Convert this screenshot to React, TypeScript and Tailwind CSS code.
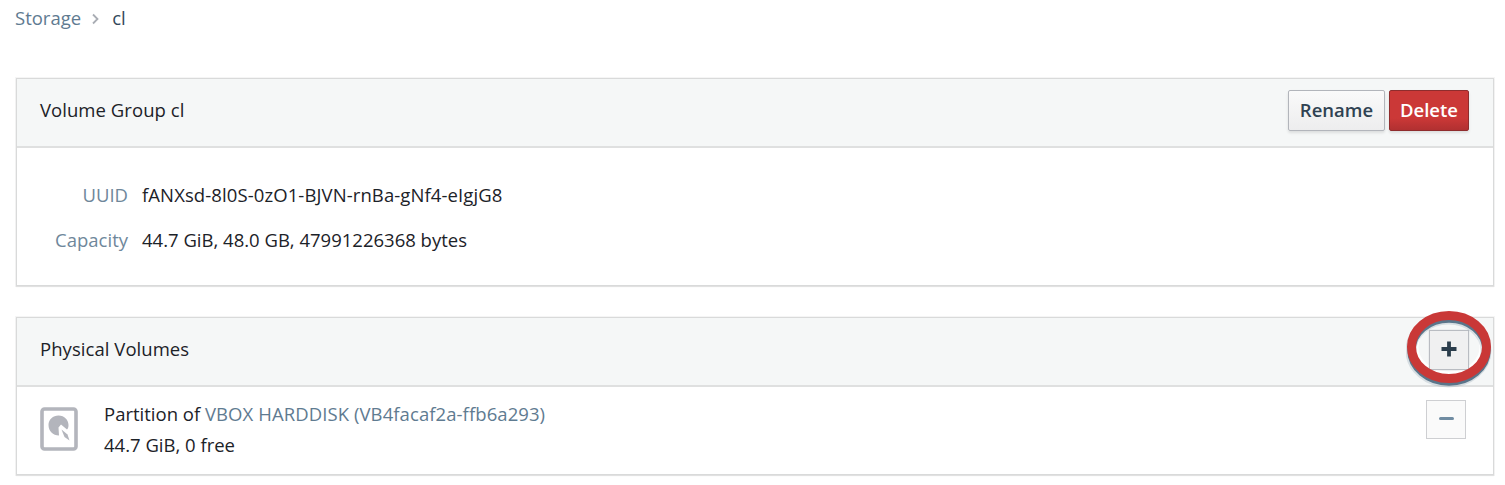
import React from "react";

function Panel({ title, actions, className, children }: { title: string; actions: React.ReactNode; className: string; children: React.ReactNode }) {
  return (
    <section className={`border-[1.500px] border-[#d9dada] bg-white shadow-[0_1px_1px_rgba(0,0,0,0.08),0_0_0_1px_rgba(0,0,0,0.04)] ${className}`}>
      <header className="flex h-[69px] items-center justify-between border-b-2 border-[#dfe0e0] bg-[#f5f7f7] pl-[23px]">
        <h2 className="pb-[5px] tracking-[0.05px]">{title}</h2>
        {actions}
      </header>
      {children}
    </section>
  );
}

function DiskIcon() {
  return (
    <svg className="h-11 w-[38px]" viewBox="0 0 38 44" fill="none">
      <rect x="2" y="2" width="34" height="40" rx="2.500" stroke="#b3b5bc" strokeWidth="3.600" />
      <path d="M19 28.500C13 28.500 8.500 24 8.500 18C8.500 12.500 13 8.500 18.500 8.500C24.500 8.500 28.500 13 28.500 18C28.500 20 28 21.500 27 22.500L21 17.500L18.500 20.500Z" fill="#b3b5bc" />
      <path d="M21.500 22.500L27.500 27.500L29.500 33.500L24.500 30Z" fill="#b3b5bc" />
    </svg>
  );
}

export default function App() {
  return (
    <main className="h-[485px] overflow-hidden bg-white pl-[16px] pr-[11px] font-['Open_Sans',sans-serif] text-[18.500px] leading-[30px] text-[#1c2228]">
      <nav className="flex h-[36px] items-center">
        <a className="-ml-px text-[#5f7b91]">Storage</a>
        <svg className="ml-[11px] mr-[13px] mt-px h-3 w-[7px]" viewBox="0 0 7 12" fill="none">
          <path d="M1 1.500L5.500 6L1 10.500" stroke="#a9adb4" strokeWidth="1.800" />
        </svg>
        <span className="text-[#33485a]">cl</span>
      </nav>

      <Panel
        className="mt-[42px] h-[208px]"
        title="Volume Group cl"
        actions={
          <div className="mb-[4px] mr-[24px] flex gap-[4px] font-semibold">
            <button className="flex h-[41px] w-[97px] items-center justify-center rounded-[2px] border border-[#b2b5bb] bg-linear-to-b from-[#fafafa] to-[#ededee] pb-0.5 text-[#2f4252] shadow-[0_2px_3px_rgba(0,0,0,0.1)]">Rename</button>
            <button className="flex h-[41px] w-[80px] items-center justify-center rounded-[2px] border border-[#8f2c2d] bg-linear-to-b from-[#cb3837] from-70% to-[#b13031] pb-0.5 text-white shadow-[0_2px_3px_rgba(0,0,0,0.1)]">Delete</button>
          </div>
        }
      >
        <dl className="grid grid-cols-[111px_1fr] gap-x-[14px] gap-y-[15px] pt-[32px]">
          <dt className="text-right text-[#6f879b]">UUID</dt>
          <dd className="tracking-[0.1px]">fANXsd-8l0S-0zO1-BJVN-rnBa-gNf4-eIgjG8</dd>
          <dt className="text-right text-[#6f879b]">Capacity</dt>
          <dd>44.7 GiB, 48.0 GB, 47991226368 bytes</dd>
        </dl>
      </Panel>

      <Panel
        className="mt-[31px] h-[158px]"
        title="Physical Volumes"
        actions={
          <div className="relative mb-[3px] mr-[24px]">
            <svg className="pointer-events-none absolute left-[-23px] top-[-20px] h-[80px] w-[88px]" viewBox="0 0 88 80" fill="none">
              <ellipse cx="43" cy="37" rx="35" ry="29" stroke="white" strokeWidth="9" />
            </svg>
            <button className="relative flex h-[40px] w-[40px] items-center justify-center border border-[#b9bcc2] bg-[#f0f0f1] shadow-[0_0_1px_#c2c4c9]">
              <svg className="mb-0.5 h-4 w-4" viewBox="0 0 16 16">
                <path d="M8 0.500V15.500M0.500 8H15.500" stroke="#2b3d4c" strokeWidth="3.800" />
              </svg>
            </button>
            <svg className="pointer-events-none absolute left-[-23px] top-[-20px] h-[80px] w-[88px]" viewBox="0 0 88 80" fill="none">
              <ellipse cx="42.500" cy="40.500" rx="37.500" ry="31.500" stroke="#5f7b91" strokeOpacity="0.2" strokeWidth="11" />
              <ellipse cx="43" cy="40" rx="37.500" ry="31.500" stroke="#5a758a" strokeWidth="8.500" />
              <ellipse cx="43" cy="37" rx="37.500" ry="31.500" stroke="#c93837" strokeWidth="9" />
            </svg>
          </div>
        }
      >
        <div className="flex pl-[23px] pr-[27px] pt-[11px]">
          <div className="pt-[9px]"><DiskIcon /></div>
          <div className="ml-[26px] leading-[31px]">
            <p>Partition of <a className="tracking-[0.08px] text-[#5f7b91]">VBOX HARDDISK (VB4facaf2a-ffb6a293)</a></p>
            <p>44.7 GiB, 0 free</p>
          </div>
          <button className="ml-auto mt-[2px] flex h-[39px] w-[40px] items-center justify-center border border-[#cecfd2] bg-[#fafafa]">
            <span className="mb-0.5 h-[3px] w-[15px] rounded-sm bg-[#708ca2]" />
          </button>
        </div>
      </Panel>
    </main>
  );
}
